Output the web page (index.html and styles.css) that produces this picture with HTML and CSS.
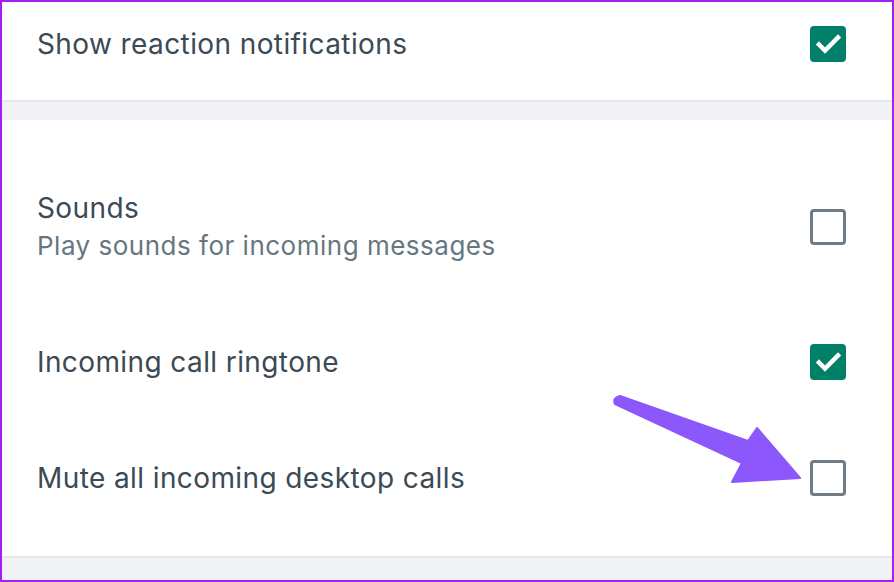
FILE: index.html
```html
<!DOCTYPE html>
<html lang="en">
<head>
    <meta charset="UTF-8">
    <meta name="viewport" content="width=device-width, initial-scale=1.0">
    <title>Notifications</title>
    <link rel="stylesheet" href="styles.css">
</head>
<body>
    <div class="frame">
        <div class="section top">
            <div class="row">
                <div class="label">Show reaction notifications</div>
                <span class="check on">
                    <svg viewBox="0 0 36 36" width="36" height="36"><path d="M9 18.5 L15 24.5 L28 11.5" fill="none" stroke="#fff" stroke-width="4.5" stroke-linecap="square"/></svg>
                </span>
            </div>
        </div>
        <div class="band"></div>
        <div class="section main">
            <div class="row">
                <div>
                    <div class="label">Sounds</div>
                    <div class="sub">Play sounds for incoming messages</div>
                </div>
                <span class="check"></span>
            </div>
            <div class="row">
                <div class="label">Incoming call ringtone</div>
                <span class="check on">
                    <svg viewBox="0 0 36 36" width="36" height="36"><path d="M9 18.5 L15 24.5 L28 11.5" fill="none" stroke="#fff" stroke-width="4.5" stroke-linecap="square"/></svg>
                </span>
            </div>
            <div class="row">
                <div class="label">Mute all incoming desktop calls</div>
                <span class="check"></span>
            </div>
        </div>
        <div class="band last"></div>

        <svg class="arrow" viewBox="0 0 894 582" width="894" height="582">
            <path d="M615 404 Q612 398 620 396 L748 441 L757 428 L800 478 L732 482 L742 463 Z" fill="#8c57fb" stroke="#8c57fb" stroke-width="2" stroke-linejoin="round"/>
        </svg>
    </div>
</body>
</html>
```

FILE: styles.css
```css
body {
    margin: 0;
    font-family: Inter, "Noto Sans", sans-serif;
}
.frame {
    position: relative;
    width: 894px;
    height: 582px;
    box-sizing: border-box;
    border: 2px solid #a41ff2;
    background: #fff;
    overflow: hidden;
}
.section {
    padding: 0 46px 0 35px;
}
.section.top {
    padding-top: 23px;
    padding-bottom: 37px;
}
.section.main {
    padding-top: 69px;
    padding-bottom: 59px;
    display: flex;
    flex-direction: column;
    gap: 78px;
}
.row {
    display: flex;
    align-items: center;
    justify-content: space-between;
}
.label {
    font-size: 28px;
    line-height: 38px;
    letter-spacing: 0.4px;
    color: #3b4a54;
}
.sub {
    font-size: 26px;
    line-height: 38px;
    letter-spacing: 0.5px;
    color: #667781;
}
.check {
    width: 36px;
    height: 36px;
    box-sizing: border-box;
    border: 3px solid #717b83;
    border-radius: 4px;
    display: block;
}
.check.on {
    border: none;
    background: #008069;
}
.check svg {
    display: block;
}
.band {
    height: 20px;
    box-sizing: border-box;
    border-top: 2px solid #e6e7e9;
    background: #f0f2f5;
}
.band.last {
    height: 24px;
}
.arrow {
    position: absolute;
    left: -2px;
    top: -2px;
    pointer-events: none;
}
```
